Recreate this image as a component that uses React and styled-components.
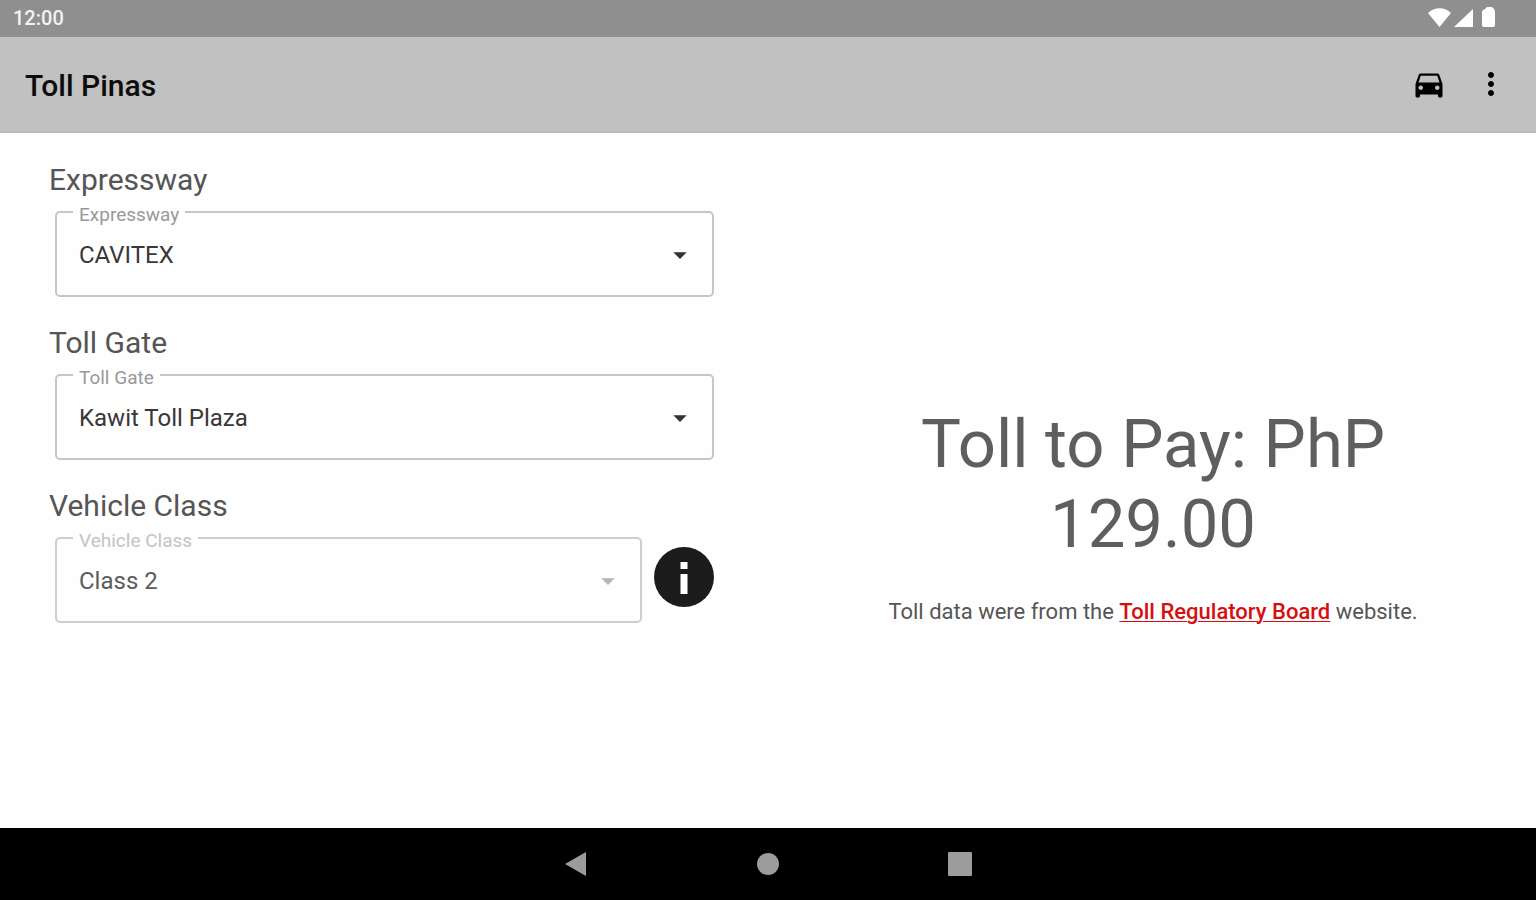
import React, { useState } from "react";
import styled, { createGlobalStyle } from "styled-components";
import { MdArrowDropDown, MdDirectionsCar, MdMoreVert } from "react-icons/md";

const GlobalStyle = createGlobalStyle`
  * {
    box-sizing: border-box;
  }

  body {
    background: #fefefe;
    color: #555;
    font-family: Roboto, "Liberation Sans", sans-serif;
    margin: 0;
  }

  button,
  select {
    font-family: inherit;
  }
`;

const Screen = styled.div`
  display: flex;
  flex-direction: column;
  min-height: 100vh;
`;

const StatusBar = styled.div`
  align-items: center;
  background: #8f8f8f;
  color: #f2f2f2;
  display: flex;
  font-size: 20px;
  font-weight: 500;
  height: 37px;
  justify-content: space-between;
  padding: 0 40px 2px 13px;
`;

const AppBar = styled.header`
  align-items: center;
  background: #c1c1c1;
  border-bottom: 1px solid #b9b9b9;
  display: flex;
  height: 96px;
  justify-content: space-between;
  padding: 0 23px 0 25px;
`;

const Title = styled.h1`
  color: #0c0c0c;
  font-size: 30px;
  font-weight: 500;
  line-height: 32px;
  margin: 0;
  padding-top: 2px;
`;

const Actions = styled.div`
  display: flex;
  gap: 18px;
  padding-bottom: 2px;
`;

const IconButton = styled.button`
  background: none;
  border: 0;
  color: #000;
  cursor: pointer;
  display: flex;
  padding: 4px;
`;

const Content = styled.main`
  display: grid;
  flex: 1;
  grid-template-columns: 1fr 1fr;
`;

const Form = styled.form`
  display: flex;
  flex-direction: column;
  gap: 30px;
  padding: 31px 54px 31px 49px;
`;

const Heading = styled.h2`
  font-size: 30px;
  font-weight: 400;
  line-height: 32px;
  margin: 0 0 5px;
`;

const FieldRow = styled.div`
  align-items: flex-end;
  display: flex;
  gap: 12px;
  padding-left: 6px;
`;

const Outline = styled.fieldset`
  border: 2px solid ${({ $muted }) => ($muted ? "#cecece" : "#c6c6c6")};
  border-radius: 5px;
  flex: 1;
  margin: 0;
  min-width: 0;
  padding: 0 16px 8px;
`;

const Legend = styled.legend`
  color: ${({ $muted }) => ($muted ? "#c4c4c4" : "#999")};
  font-size: 19px;
  line-height: 16px;
  padding: 6px 6px 0;
`;

const SelectBox = styled.div`
  align-items: center;
  display: grid;
  color: ${({ $muted }) => ($muted ? "#b5b5b5" : "#333")};

  > * {
    grid-area: 1 / 1;
  }

  svg {
    justify-self: end;
    pointer-events: none;
  }
`;

const Select = styled.select`
  appearance: none;
  background: none;
  border: 0;
  color: #383838;
  font-size: 24px;
  height: 64px;
  opacity: 1;
  padding: 0 40px 0 6px;
  width: 100%;

  &:disabled {
    color: #5c5c5c;
  }
`;

const InfoButton = styled.button`
  background: none;
  border: 0;
  cursor: pointer;
  display: flex;
  padding: 0 0 16px;
`;

const Result = styled.section`
  align-items: center;
  display: flex;
  flex-direction: column;
  justify-content: center;
  padding: 68px 100px 0 102px;
  text-align: center;
`;

const Amount = styled.p`
  color: #5e5e5e;
  font-size: 67px;
  font-weight: 400;
  line-height: 80px;
  margin: 0;
  max-width: 500px;
`;

const Source = styled.p`
  font-size: 22px;
  line-height: 28px;
  margin: 34px 0 0;
  white-space: nowrap;
`;

const SourceLink = styled.a`
  color: #d50f0f;
  font-weight: 500;
  text-decoration-thickness: 1px;
  text-underline-offset: 2px;
`;

const NavBar = styled.nav`
  align-items: center;
  background: #000;
  display: flex;
  gap: 160px;
  height: 72px;
  justify-content: center;
`;

const NavButton = styled(IconButton)`
  color: #9c9c9c;
`;

const StatusIcons = () => (
  <svg width="68" height="22" viewBox="0 0 68 22" fill="#fff" aria-hidden="true">
    <path d="M0 6C6-0.500 17-0.500 23 6L11.500 20Z" />
    <path d="M45 2V20H26Z" />
    <path d="M57 2l2-2h5l2 2q1 1 1 3v13q0 2-2 2h-9q-2 0-2-2V5q0-2 3-3Z" />
  </svg>
);

const InfoIcon = () => (
  <svg width="60" height="60" viewBox="0 0 60 60" aria-hidden="true">
    <circle cx="30" cy="30" r="30" fill="#1c1c1c" />
    <path fill="#fff" d="M26.500 15h7v7h-7zM26.500 27h7v20h-7z" />
  </svg>
);

const Field = ({ id, label, options, muted, children }) => {
  const [value, setValue] = useState(options[0]);

  return (
    <div>
      <Heading>{label}</Heading>
      <FieldRow>
        <Outline $muted={muted}>
          <Legend $muted={muted}>
            <label htmlFor={id}>{label}</label>
          </Legend>
          <SelectBox $muted={muted}>
            <Select
              id={id}
              value={value}
              disabled={muted}
              onChange={event => setValue(event.target.value)}
            >
              {options.map(option => (
                <option key={option}>{option}</option>
              ))}
            </Select>
            <MdArrowDropDown size={32} aria-hidden="true" />
          </SelectBox>
        </Outline>
        {children}
      </FieldRow>
    </div>
  );
};

const App = () => (
  <Screen>
    <GlobalStyle />
    <StatusBar>
      <span>12:00</span>
      <StatusIcons />
    </StatusBar>
    <AppBar>
      <Title>Toll Pinas</Title>
      <Actions>
        <IconButton type="button" aria-label="Vehicle">
          <MdDirectionsCar size={36} />
        </IconButton>
        <IconButton type="button" aria-label="More options">
          <MdMoreVert size={36} />
        </IconButton>
      </Actions>
    </AppBar>
    <Content>
      <Form>
        <Field id="expressway" label="Expressway" options={["CAVITEX"]} />
        <Field id="toll-gate" label="Toll Gate" options={["Kawit Toll Plaza"]} />
        <Field
          id="vehicle-class"
          label="Vehicle Class"
          options={["Class 2"]}
          muted
        >
          <InfoButton type="button" aria-label="Vehicle class information">
            <InfoIcon />
          </InfoButton>
        </Field>
      </Form>
      <Result>
        <Amount>Toll to Pay: PhP 129.00</Amount>
        <Source>
          Toll data were from the{" "}
          <SourceLink href="#toll-regulatory-board">
            Toll Regulatory Board
          </SourceLink>{" "}
          website.
        </Source>
      </Result>
    </Content>
    <NavBar>
      <NavButton type="button" aria-label="Back">
        <svg width="24" height="24" fill="currentColor">
          <path d="M1 12 22 0V24Z" />
        </svg>
      </NavButton>
      <NavButton type="button" aria-label="Home">
        <svg width="24" height="24" fill="currentColor">
          <circle cx="12" cy="12" r="11" />
        </svg>
      </NavButton>
      <NavButton type="button" aria-label="Recent apps">
        <svg width="24" height="24" fill="currentColor">
          <rect width="24" height="24" rx="1" />
        </svg>
      </NavButton>
    </NavBar>
  </Screen>
);

export default App;
